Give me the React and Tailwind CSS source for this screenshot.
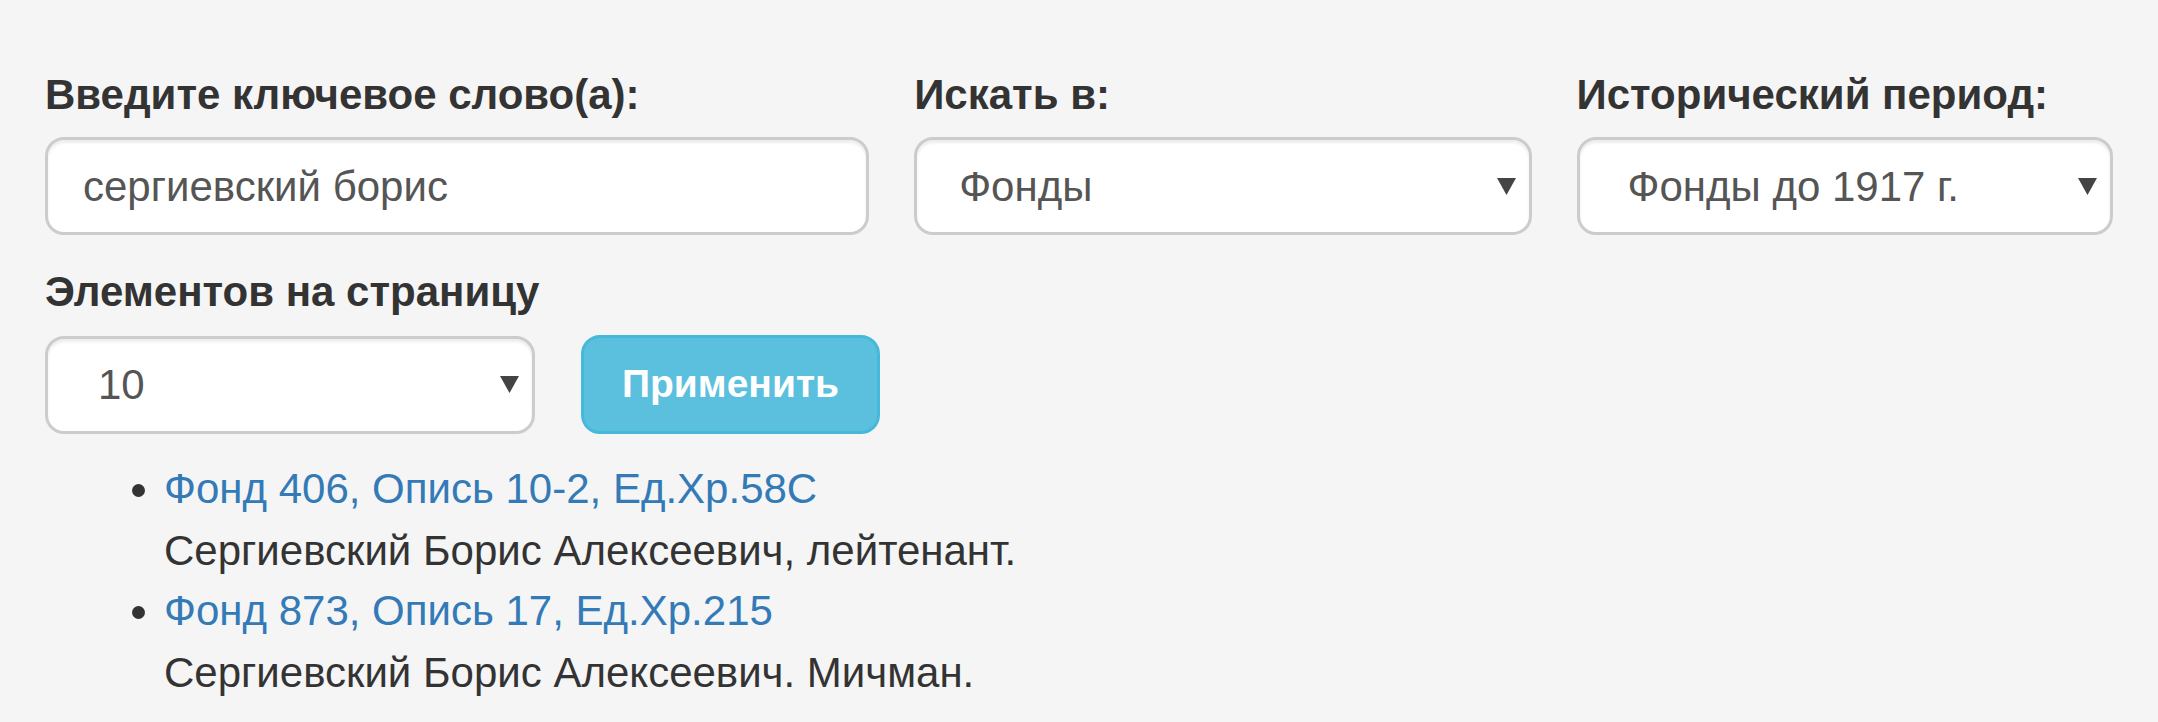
import React from 'react';

const font = { fontFamily: '"Liberation Sans", Arial, sans-serif' };

function Caret() {
  return (
    <svg width="19" height="17" viewBox="0 0 19 17" className="shrink-0">
      <path d="M0 0 H19 L9.5 17 Z" fill="#444" />
    </svg>
  );
}

function Select({ value, width, pad }) {
  return (
    <div
      className={`${width} h-[98px] flex items-center justify-between bg-white border-[3px] border-[#ccc] rounded-[19px] shadow-[inset_0_3px_3px_rgba(0,0,0,0.075)] pr-[13px] text-[42px] text-[#555] ${pad}`}
    >
      <span>{value}</span>
      <Caret />
    </div>
  );
}

const results = [
  { link: 'Фонд 406, Опись 10-2, Ед.Хр.58С', text: 'Сергиевский Борис Алексеевич, лейтенант.' },
  { link: 'Фонд 873, Опись 17, Ед.Хр.215', text: 'Сергиевский Борис Алексеевич. Мичман.' },
];

export default function App() {
  return (
    <div className="min-h-[722px] bg-[#f5f5f5] px-[45px] pt-[66px] text-[#333]" style={font}>
      {/* search row */}
      <div className="flex gap-[45px]">
        <div className="w-[825px]">
          <label className="block font-bold text-[42px] leading-[57px] mb-[14px]">Введите ключевое слово(а):</label>
          <div className="h-[98px] flex items-center bg-white border-[3px] border-[#ccc] rounded-[19px] shadow-[inset_0_3px_3px_rgba(0,0,0,0.075)] pl-[35px] text-[42px] text-[#555]">
            сергиевский борис
          </div>
        </div>
        <div className="w-[618px]">
          <label className="block font-bold text-[42px] leading-[57px] mb-[14px]">Искать в:</label>
          <Select value="Фонды" width="w-full" pad="pl-[42px]" />
        </div>
        <div className="w-[537px]">
          <label className="block font-bold text-[42px] leading-[57px] mb-[14px]">Исторический период:</label>
          <Select value="Фонды до 1917 г." width="w-full" pad="pl-[48px]" />
        </div>
      </div>

      {/* per page */}
      <div className="mt-[28px]">
        <label className="block font-bold text-[42px] leading-[57px] mb-[15px]">Элементов на страницу</label>
        <div className="flex items-center gap-[46px]">
          <Select value="10" width="w-[490px]" pad="pl-[50px]" />
          <button className="h-[99px] px-[38px] bg-[#5bc0de] border-[3px] border-[#46b8da] rounded-[19px] text-white font-bold text-[39px]">
            Применить
          </button>
        </div>
      </div>

      {/* results */}
      <ul className="list-disc pl-[119px] mt-[25px] text-[42px] leading-[60px]">
        {results.map(r => (
          <li key={r.link}>
            <a href="#" className="text-[#337ab7]">{r.link}</a>
            <div className="mt-[2px]">{r.text}</div>
          </li>
        ))}
      </ul>
    </div>
  );
}
